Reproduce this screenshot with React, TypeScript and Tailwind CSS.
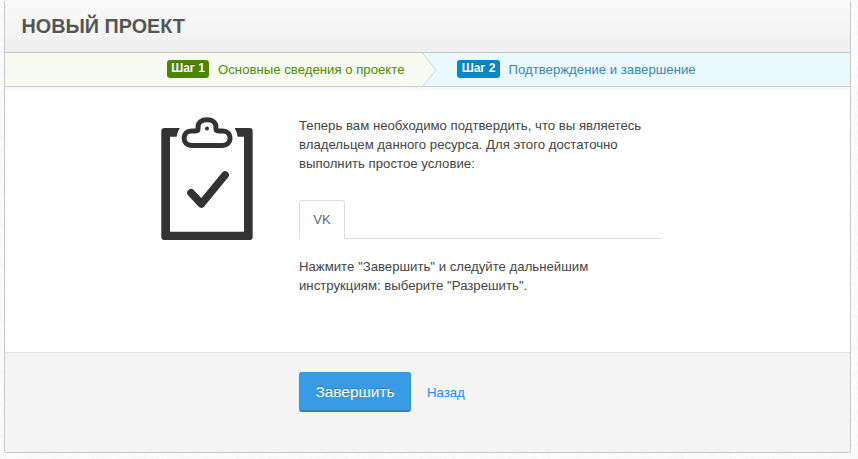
function ClipboardIcon() {
  return (
    <svg width="92" height="125" viewBox="11 11 92 125" className="block shrink-0" fill="none">
      <path
        fill="#333"
        fillRule="evenodd"
        d="M14.5 23H29.8Q27.3 26.5 26.7 31.7H20V126.7H94V31.7H87.7Q87.1 26.5 84.6 23H99.5Q102.7 23 102.7 26.2V132Q102.7 135 99.7 135H14.3Q11.3 135 11.3 132V26.2Q11.3 23 14.5 23Z"
      />
      <path
        stroke="#333"
        strokeWidth="5"
        strokeLinejoin="round"
        d="M41.3 25.9H45.5Q48.1 25.9 48.1 23.2V21.5C48.1 17.5 51.5 14.7 57 14.7C62.5 14.7 65.9 17.5 65.9 21.5V23.2Q65.9 25.9 68.5 25.9H72.7C77.2 25.9 80.1 29 80.1 33.1C80.1 37.2 77.2 40.4 72.7 40.4H41.3C36.8 40.4 34.1 37.2 34.1 33.1C34.1 29 36.8 25.9 41.3 25.9Z"
      />
      <circle cx="57" cy="23.6" r="2" fill="#333" />
      <path stroke="#333" strokeWidth="7.8" strokeLinecap="round" strokeLinejoin="round" d="M41.1 87.8L51.4 98.9L75 70.1" />
    </svg>
  );
}

function PaperTexture() {
  return (
    <svg className="pointer-events-none absolute inset-0 h-full w-full" aria-hidden="true">
      <filter id="paper">
        <feTurbulence type="fractalNoise" baseFrequency="0.25" numOctaves="3" stitchTiles="stitch" />
        <feColorMatrix values="0 0 0 0 0.5  0 0 0 0 0.5  0 0 0 0 0.5  0.14 0 0 0 -0.04" />
      </filter>
      <rect width="100%" height="100%" filter="url(#paper)" />
    </svg>
  );
}

export default function App() {
  return (
    <div className="relative h-[459px] w-[858px] overflow-hidden bg-[#fcfcfc] pl-1 font-['Liberation_Sans',Arial,sans-serif] text-[13.2px] leading-[19px] text-[#444]">
      <PaperTexture />
      <div className="relative flex h-[453px] w-[847px] flex-col overflow-hidden rounded-[3px] border border-t-0 border-[#c8c8c8] bg-white">
        <header className="flex h-[53px] shrink-0 items-center border-b border-[#c8c8c8] bg-linear-to-b from-[#fafafa] to-[#efefef] pl-[16.5px]">
          <h1 className="text-[19.8px] leading-6 font-bold text-[#555] [text-shadow:0_1px_0_#fff]">НОВЫЙ ПРОЕКТ</h1>
        </header>

        <div className="relative flex h-[34px] shrink-0 border-b border-[#cfcfcf] bg-[#eaf8ff] shadow-[0_2px_5px_rgba(0,0,0,0.05)]">
          <div className="flex w-[417px] items-start bg-[#f8fbf2] pt-[7px] pl-[162px] text-[#4d8c00]">
            <span className="mr-[9px] h-[18px] w-[42px] shrink-0 rounded-[3px] bg-[#4d8500] text-center text-[12px] leading-[17px] font-bold text-white [text-shadow:0_-1px_0_rgba(0,0,0,0.25)]">
              Шаг 1
            </span>
            <span className="whitespace-nowrap">Основные сведения о проекте</span>
          </div>
          <svg width="15" height="33" viewBox="0 0 15 33" className="block shrink-0">
            <path d="M0 0L14 17L0.5 33H0Z" fill="#f8fbf2" />
            <path d="M0.3 0L14 17L0.8 33" fill="none" stroke="#cfd3d3" />
          </svg>
          <div className="flex items-start pt-[7px] pl-5 text-[#3a87ad]">
            <span className="mr-[8.5px] h-[18px] w-[43px] shrink-0 rounded-[3px] bg-[#0488c8] text-center text-[12px] leading-[17px] font-bold text-white [text-shadow:0_-1px_0_rgba(0,0,0,0.25)]">
              Шаг 2
            </span>
            <span className="whitespace-nowrap">Подтверждение и завершение</span>
          </div>
        </div>

        <main className="flex h-[265px] shrink-0 pt-[29px] pl-[156px]">
          <ClipboardIcon />
          <div className="ml-[46px] w-[362px]">
            <p>
              Теперь вам необходимо подтвердить, что вы являетесь
              <br />
              владельцем данного ресурса. Для этого достаточно
              <br />
              выполнить простое условие:
            </p>
            <div className="mt-[27px] flex h-[39px] border-b border-[#ddd]">
              <div className="-mb-px flex h-[39px] w-[46px] items-center justify-center rounded-t-[3px] border border-b-0 border-[#ddd] bg-white pb-0.5 text-[#666]">
                VK
              </div>
            </div>
            <p className="mt-[18px]">
              Нажмите "Завершить" и следуйте дальнейшим
              <br />
              инструкциям: выберите "Разрешить".
            </p>
          </div>
        </main>

        <footer className="flex flex-1 items-start border-t border-[#e2e2e2] bg-[#f4f4f4] pt-[19px] pl-[294px]">
          <button className="h-10 w-28 rounded-[3px] border border-b-2 border-[#3592dc] border-b-[#2f7fc4] bg-[#389be5] text-[15.4px] leading-5 text-white [text-shadow:0_-1px_0_rgba(0,0,0,0.25)]">
            Завершить
          </button>
          <a className="mt-[11px] ml-4 text-[#0e90ea]">Назад</a>
        </footer>
      </div>
    </div>
  );
}
